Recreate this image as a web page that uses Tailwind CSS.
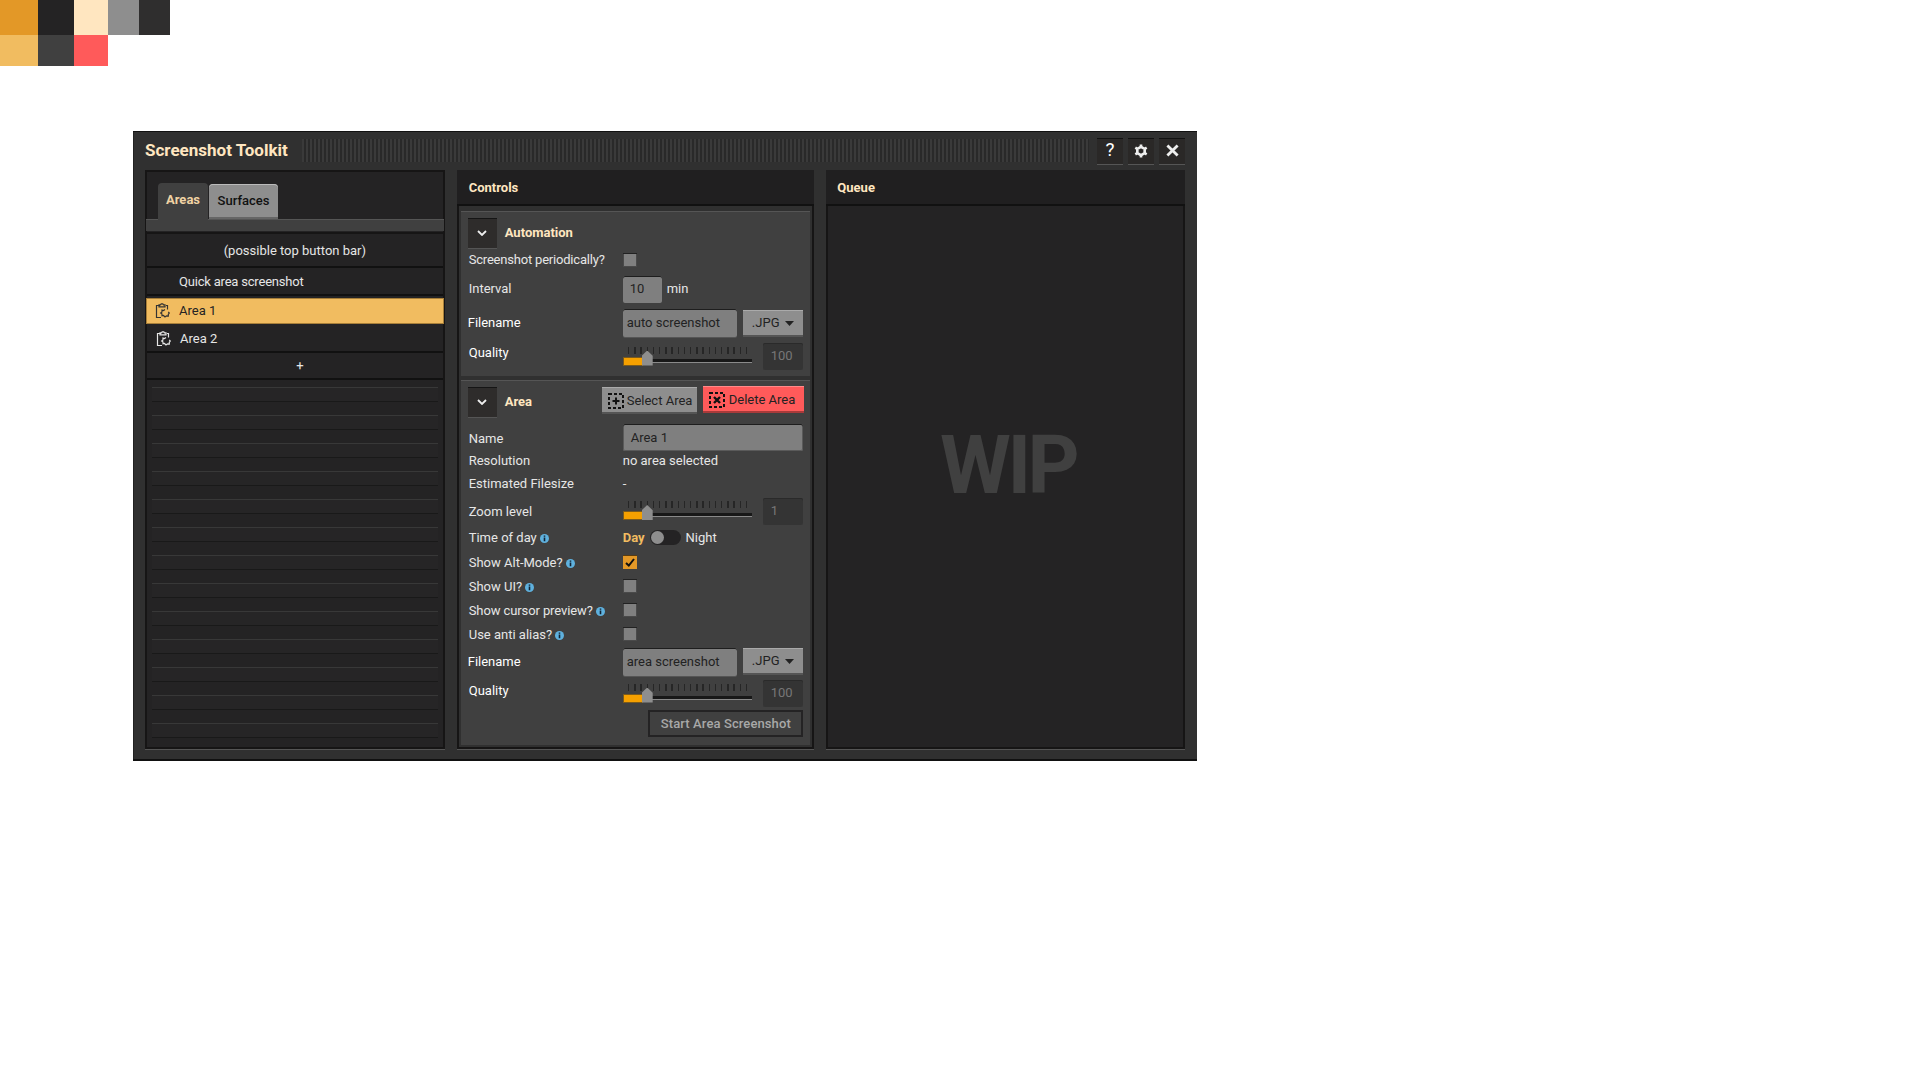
<!DOCTYPE html>
<html lang="en">
<head>
    <meta charset="UTF-8">
    <title>Screenshot Toolkit</title>
    <script src="https://cdn.jsdelivr.net/npm/@tailwindcss/browser@4"></script>
</head>
<body class="bg-white min-h-screen font-['Roboto',sans-serif] text-[13px] text-[#e6e6e6]">
    <!-- palette -->
    <div class="flex h-[35px]">
        <div class="w-[38px] bg-[#e39827]"></div>
        <div class="w-[36px] bg-[#242324]"></div>
        <div class="w-[34px] bg-[#ffe6c0]"></div>
        <div class="w-[31px] bg-[#8e8e8e]"></div>
        <div class="w-[31px] bg-[#2f2e2e]"></div>
    </div>
    <div class="flex h-[31px]">
        <div class="w-[38px] bg-[#f1bc60]"></div>
        <div class="w-[36px] bg-[#404040]"></div>
        <div class="w-[34px] bg-[#ff5a5a]"></div>
    </div>

    <!-- window -->
    <div class="ml-[133px] mt-[65px] w-[1064px] h-[630px] bg-[#303030] px-[12px] flex flex-col shadow-[inset_0_1px_0_#111,inset_0_-2px_0_#111,inset_1px_0_0_#222]">
        <div class="h-[39px] flex items-center shrink-0">
            <div class="w-[157px] font-bold text-[17px] text-[#ffe6c0]">Screenshot Toolkit</div>
            <div class="w-[788px] h-[23px] bg-[repeating-linear-gradient(90deg,#3a3a3a_0,#3a3a3a_2px,#292929_2px,#292929_4px)]"></div>
            <div class="ml-[8px] flex gap-[5px]">
                <div class="w-[26px] h-[26px] bg-[#2a2827] flex items-center justify-center text-white text-[19px] shadow-[inset_0_1px_0_#111,0_1px_0_#555]">?</div>
                <div class="w-[26px] h-[26px] bg-[#2a2827] flex items-center justify-center shadow-[inset_0_1px_0_#111,0_1px_0_#555]">
                    <svg width="14" height="14" viewBox="0 0 16 16"><path fill="none" stroke="#eee" stroke-width="3" d="M8 3.2 12.2 5.6V10.4L8 12.8 3.8 10.4V5.6Z"/><path stroke="#eee" stroke-width="3" d="M8 0.5V3M8 13V15.5M1.5 4.2 3.7 5.5M12.3 10.5 14.5 11.8M14.5 4.2 12.3 5.5M3.7 10.5 1.5 11.8"/></svg>
                </div>
                <div class="w-[26px] h-[26px] bg-[#2a2827] flex items-center justify-center shadow-[inset_0_1px_0_#111,0_1px_0_#555]">
                    <svg width="13" height="13" viewBox="0 0 14 14"><path stroke="#eee" stroke-width="3" d="M1.5 1.5 12.5 12.5M12.5 1.5 1.5 12.5"/></svg>
                </div>
            </div>
        </div>

        <div class="flex gap-[12px] h-[579px]">
            <!-- left panel -->
            <div class="w-[300px] bg-[#242324] flex flex-col shadow-[inset_0_0_0_2px_#161515,0_1px_0_#555]">
                <div class="h-[49px] flex items-end pl-[13px] shrink-0">
                    <div class="w-[50px] h-[39px] -mb-[3px] bg-[#404040] rounded-t-[4px] flex items-center justify-center pb-[5px] font-bold text-[#f0d3a4] z-10">Areas</div>
                    <div class="w-[69px] h-[35px] ml-[1px] bg-[#8e8e8e] rounded-t-[4px] flex items-center justify-center pb-[2px] text-[#111] font-medium shadow-[inset_0_1px_0_#bbb,inset_0_-2px_0_#666]">Surfaces</div>
                </div>
                <div class="h-[12px] mx-[1px] bg-[#404040] shadow-[inset_0_1px_0_#555] shrink-0"></div>
                <div class="h-[36px] mt-[1px] mx-[2px] pt-[4px] flex items-center justify-center border-b-2 border-[#111] shadow-[inset_0_2px_0_#161515] shrink-0">(possible top button bar)</div>
                <div class="h-[28px] mx-[2px] pl-[32px] pt-[2px] flex items-center border-b-2 border-[#111] tracking-[-0.2px]">Quick area screenshot</div>
                <div class="h-[26px] mx-[1px] mt-[2px] pl-[8px] flex items-center gap-[9px] bg-[#f1bc60] text-[#242324] shadow-[inset_0_0_0_1px_#a87f39]">
                    <svg width="16" height="16" viewBox="0 0 16 16" fill="none" stroke="#333" stroke-width="1.2"><path d="M6 2.5H2.5V14.5H7M12 2.5H13.5V6.5M5 3.8V1.8H6.5L7.2 0.8H8.8L9.5 1.8H11V3.8ZM11 6.5 9.5 7.5 8 7V9L6.7 10 8 11V12.8L9.5 12.5 11 14 12.5 12.8 14.3 13V11.3L15.3 10 14.3 8.8"/></svg>
                    <span>Area 1</span>
                </div>
                <div class="h-[27px] mx-[2px] mt-[2px] pl-[8px] flex items-center gap-[9px] border-b-2 border-[#111]">
                    <svg width="16" height="16" viewBox="0 0 16 16" fill="none" stroke="#e6e6e6" stroke-width="1.2"><path d="M6 2.5H2.5V14.5H7M12 2.5H13.5V6.5M5 3.8V1.8H6.5L7.2 0.8H8.8L9.5 1.8H11V3.8ZM11 6.5 9.5 7.5 8 7V9L6.7 10 8 11V12.8L9.5 12.5 11 14 12.5 12.8 14.3 13V11.3L15.3 10 14.3 8.8"/></svg>
                    <span>Area 2</span>
                </div>
                <div class="h-[27px] mx-[2px] flex items-center justify-center pl-[10px] border-b-2 border-[#111]">+</div>
                <div class="mt-[7px] mx-[7px] flex flex-col gap-[13px]">
                    <div class="h-[15px] bg-[#262526] shadow-[inset_0_1px_0_#383838,inset_0_-1px_0_#191919]"></div>
                    <div class="h-[15px] bg-[#262526] shadow-[inset_0_1px_0_#383838,inset_0_-1px_0_#191919]"></div>
                    <div class="h-[15px] bg-[#262526] shadow-[inset_0_1px_0_#383838,inset_0_-1px_0_#191919]"></div>
                    <div class="h-[15px] bg-[#262526] shadow-[inset_0_1px_0_#383838,inset_0_-1px_0_#191919]"></div>
                    <div class="h-[15px] bg-[#262526] shadow-[inset_0_1px_0_#383838,inset_0_-1px_0_#191919]"></div>
                    <div class="h-[15px] bg-[#262526] shadow-[inset_0_1px_0_#383838,inset_0_-1px_0_#191919]"></div>
                    <div class="h-[15px] bg-[#262526] shadow-[inset_0_1px_0_#383838,inset_0_-1px_0_#191919]"></div>
                    <div class="h-[15px] bg-[#262526] shadow-[inset_0_1px_0_#383838,inset_0_-1px_0_#191919]"></div>
                    <div class="h-[15px] bg-[#262526] shadow-[inset_0_1px_0_#383838,inset_0_-1px_0_#191919]"></div>
                    <div class="h-[15px] bg-[#262526] shadow-[inset_0_1px_0_#383838,inset_0_-1px_0_#191919]"></div>
                    <div class="h-[15px] bg-[#262526] shadow-[inset_0_1px_0_#383838,inset_0_-1px_0_#191919]"></div>
                    <div class="h-[15px] bg-[#262526] shadow-[inset_0_1px_0_#383838,inset_0_-1px_0_#191919]"></div>
                    <div class="h-[15px] bg-[#262526] shadow-[inset_0_1px_0_#383838,inset_0_-1px_0_#191919]"></div>
                </div>
            </div>

            <!-- controls panel -->
            <div class="w-[358px] bg-[#242324] flex flex-col shadow-[inset_0_0_0_2px_#161515,0_1px_0_#555]">
                <div class="h-[36px] pl-[12px] pt-[2px] flex items-center font-bold text-[#ffe6c0] border-b-2 border-[#111] bg-[#201f20] shrink-0">Controls</div>
                <div class="bg-[#303030] flex-1 mx-[2px] mb-[2px] px-[2px] pt-[5px] pb-[2px] flex flex-col gap-[4px]">
                    <!-- automation -->
                    <div class="h-[165px] bg-[#404040] shadow-[inset_0_1px_0_#555] pl-[7px] pr-[6px] pt-[7px] shrink-0">
                        <div class="h-[30px] flex items-center gap-[8px]">
                            <div class="w-[29px] h-[30px] bg-[#2e2c2b] flex items-center justify-center shadow-[inset_0_1px_0_#151515,0_1px_0_#555]">
                                <svg width="10" height="6" viewBox="0 0 10 6" fill="none" stroke="#eee" stroke-width="1.8"><path d="M1 1 5 5 9 1"/></svg>
                            </div>
                            <span class="font-bold text-[#ffe6c0]">Automation</span>
                        </div>
                        <div class="h-[24px] flex items-center">
                            <span class="w-[155px] pl-[1px] tracking-[-0.2px]">Screenshot periodically?</span>
                            <div class="w-[14px] h-[14px] bg-[#808080] shadow-[inset_0_1px_0_#222,inset_0_0_0_1px_#4a4a4a]"></div>
                        </div>
                        <div class="h-[34px] flex items-center">
                            <span class="w-[155px] pl-[1px]">Interval</span>
                            <div class="w-[39px] h-[27px] pl-[7px] flex items-center bg-[#7f7f7f] text-[#222] rounded-[2px] shadow-[inset_0_1px_0_#1e1e1e]">10</div>
                            <span class="ml-[5px]">min</span>
                        </div>
                        <div class="h-[34px] flex items-center">
                            <span class="w-[155px] text-white">Filename</span>
                            <div class="w-[114px] h-[28px] pl-[4px] flex items-center bg-[#7f7f7f] text-[#222] rounded-[2px] shadow-[inset_0_1px_0_#1e1e1e,0_1px_0_#555]">auto screenshot</div>
                            <div class="ml-[6px] w-[60px] h-[27px] flex items-center justify-center gap-[5px] bg-[#8e8e8e] text-[#222] shadow-[inset_0_1px_0_#aaa,inset_0_-2px_0_#555]">.JPG<svg width="9" height="5" viewBox="0 0 9 5"><path fill="#222" d="M0 0H9L4.5 5Z"/></svg></div>
                        </div>
                        <div class="h-[32px] flex items-center">
                            <span class="w-[155px] pl-[1px] -mt-[6px] text-white">Quality</span>
                            <div class="relative w-[129px] h-[27px]">
                                <div class="absolute left-[5px] top-[4px] w-[119px] h-[7px] bg-[repeating-linear-gradient(90deg,#262626_0,#262626_1.5px,transparent_1.5px,transparent_6.2px)]"></div>
                                <div class="absolute left-0 right-0 top-[16px] h-[4px] bg-[#181818] shadow-[inset_0_-1px_0_#8a8a8a]"></div>
                                <div class="absolute left-0 top-[14px] w-[20px] h-[9px] bg-[#f5a000] shadow-[inset_0_0_0_1px_#7a5a1d]"></div>
                                <div class="absolute left-[19px] top-[8px] w-[11px] h-[15px] bg-[#8e8e8e] [clip-path:polygon(50%_0,100%_35%,100%_100%,0_100%,0_35%)]"></div>
                            </div>
                            <div class="ml-[11px] w-[40px] h-[27px] pl-[8px] flex items-center bg-[#343434] text-[#777] rounded-[2px] shadow-[inset_0_1px_0_#2a2a2a]">100</div>
                        </div>
                    </div>

                    <!-- area -->
                    <div class="flex-1 bg-[#404040] shadow-[inset_0_1px_0_#555] pl-[7px] pr-[6px] pt-[6px]">
                        <div class="h-[31px] flex items-center">
                            <div class="w-[29px] h-[30px] bg-[#2e2c2b] flex items-center justify-center shadow-[inset_0_1px_0_#151515,0_1px_0_#555]">
                                <svg width="10" height="6" viewBox="0 0 10 6" fill="none" stroke="#eee" stroke-width="1.8"><path d="M1 1 5 5 9 1"/></svg>
                            </div>
                            <span class="ml-[8px] w-[97px] font-bold text-[#ffe6c0]">Area</span>
                            <div class="w-[95px] h-[27px] flex items-center pl-[6px] gap-[3px] bg-[#8e8e8e] text-[#222] -mt-[2px] shadow-[inset_0_1px_0_#aaa,inset_0_-2px_0_#555]">
                                <svg width="16" height="16" viewBox="0 0 16 16" fill="none" stroke="#111"><path stroke-width="2" stroke-dasharray="3 2" d="M1 1H15V15H1Z"/><path stroke-width="2" d="M8 4.5V11.5M4.5 8H11.5"/></svg>
                                <span>Select Area</span>
                            </div>
                            <div class="ml-[6px] w-[101px] h-[27px] flex items-center pl-[6px] gap-[4px] bg-[#ff5a5a] text-[#222] -mt-[4px] shadow-[inset_0_1px_0_#ff8a8a,inset_0_-2px_0_#a83a3a]">
                                <svg width="16" height="16" viewBox="0 0 16 16" fill="none" stroke="#111"><path stroke-width="2" stroke-dasharray="3 2" d="M1 1H15V15H1Z"/><path stroke-width="2.4" d="M5 5 11 11M11 5 5 11"/></svg>
                                <span>Delete Area</span>
                            </div>
                        </div>
                        <div class="h-[31px] mt-[5px] flex items-center">
                            <span class="w-[155px] pl-[1px] pt-[2px]">Name</span>
                            <div class="w-[180px] h-[27px] pl-[8px] flex items-center bg-[#7f7f7f] text-[#222] rounded-[2px] shadow-[inset_0_1px_0_#1e1e1e,inset_0_0_0_1px_#5a5a5a]">Area 1</div>
                        </div>
                        <div class="h-[14px] flex items-center">
                            <span class="w-[155px] pl-[1px] pt-[2px]">Resolution</span><span class="pt-[2px]">no area selected</span>
                        </div>
                        <div class="h-[33px] flex items-center">
                            <span class="w-[155px] pl-[1px] pt-[1px]">Estimated Filesize</span><span class="pt-[1px]">-</span>
                        </div>
                        <div class="h-[24px] flex items-center">
                            <span class="w-[155px] pl-[1px]">Zoom level</span>
                            <div class="relative w-[129px] h-[27px] shrink-0 -mt-[3px]">
                                <div class="absolute left-[5px] top-[4px] w-[119px] h-[7px] bg-[repeating-linear-gradient(90deg,#262626_0,#262626_1.5px,transparent_1.5px,transparent_6.2px)]"></div>
                                <div class="absolute left-0 right-0 top-[16px] h-[4px] bg-[#181818] shadow-[inset_0_-1px_0_#8a8a8a]"></div>
                                <div class="absolute left-0 top-[14px] w-[20px] h-[9px] bg-[#f5a000] shadow-[inset_0_0_0_1px_#7a5a1d]"></div>
                                <div class="absolute left-[19px] top-[8px] w-[11px] h-[15px] bg-[#8e8e8e] [clip-path:polygon(50%_0,100%_35%,100%_100%,0_100%,0_35%)]"></div>
                            </div>
                            <div class="ml-[11px] w-[40px] h-[27px] pl-[8px] flex items-center bg-[#343434] text-[#777] rounded-[2px] shrink-0 -mt-[2px] shadow-[inset_0_1px_0_#2a2a2a]">1</div>
                        </div>
                        <div class="h-[26px] flex items-center">
                            <span class="w-[155px] pl-[1px] pt-[2px] flex items-center gap-[3px]">Time of day
                                <svg width="9" height="9" viewBox="0 0 8 8"><circle cx="4" cy="4" r="4" fill="#5fb1de"/><path stroke="#123" stroke-width="1.4" d="M4 3.2V6.5M4 1.4V2.5"/></svg>
                            </span>
                            <span class="pt-[2px] font-bold text-[#f1bc60]">Day</span>
                            <div class="ml-[5px] w-[31px] h-[15px] rounded-full bg-[#242324] flex items-center"><div class="ml-[1px] w-[13px] h-[13px] rounded-full bg-[#8e8e8e]"></div></div>
                            <span class="ml-[5px] pt-[2px]">Night</span>
                        </div>
                        <div class="h-[24px] flex items-center">
                            <span class="w-[155px] pl-[1px] pt-[2px] flex items-center gap-[3px]">Show Alt-Mode?
                                <svg width="9" height="9" viewBox="0 0 8 8"><circle cx="4" cy="4" r="4" fill="#5fb1de"/><path stroke="#123" stroke-width="1.4" d="M4 3.2V6.5M4 1.4V2.5"/></svg>
                            </span>
                            <div class="w-[14px] h-[14px] bg-[#e39827] flex items-center justify-center shadow-[inset_0_1px_0_#5a3c10]">
                                <svg width="10" height="9" viewBox="0 0 10 9" fill="none" stroke="#111" stroke-width="2"><path d="M1 5 3.8 7.5 9 1"/></svg>
                            </div>
                        </div>
                        <div class="h-[24px] flex items-center">
                            <span class="w-[155px] pl-[1px] pt-[2px] flex items-center gap-[3px]">Show UI?
                                <svg width="9" height="9" viewBox="0 0 8 8"><circle cx="4" cy="4" r="4" fill="#5fb1de"/><path stroke="#123" stroke-width="1.4" d="M4 3.2V6.5M4 1.4V2.5"/></svg>
                            </span>
                            <div class="w-[14px] h-[14px] bg-[#808080] shadow-[inset_0_1px_0_#222,inset_0_0_0_1px_#4a4a4a]"></div>
                        </div>
                        <div class="h-[24px] flex items-center">
                            <span class="w-[155px] pl-[1px] pt-[2px] flex items-center gap-[3px] tracking-[-0.1px]">Show cursor preview?
                                <svg width="9" height="9" viewBox="0 0 8 8"><circle cx="4" cy="4" r="4" fill="#5fb1de"/><path stroke="#123" stroke-width="1.4" d="M4 3.2V6.5M4 1.4V2.5"/></svg>
                            </span>
                            <div class="w-[14px] h-[14px] bg-[#808080] shadow-[inset_0_1px_0_#222,inset_0_0_0_1px_#4a4a4a]"></div>
                        </div>
                        <div class="h-[24px] flex items-center">
                            <span class="w-[155px] pl-[1px] pt-[2px] flex items-center gap-[3px]">Use anti alias?
                                <svg width="9" height="9" viewBox="0 0 8 8"><circle cx="4" cy="4" r="4" fill="#5fb1de"/><path stroke="#123" stroke-width="1.4" d="M4 3.2V6.5M4 1.4V2.5"/></svg>
                            </span>
                            <div class="w-[14px] h-[14px] bg-[#808080] shadow-[inset_0_1px_0_#222,inset_0_0_0_1px_#4a4a4a]"></div>
                        </div>
                        <div class="h-[32px] flex items-center">
                            <span class="w-[155px] text-white">Filename</span>
                            <div class="w-[114px] h-[28px] pl-[4px] flex items-center bg-[#7f7f7f] text-[#222] rounded-[2px] shadow-[inset_0_1px_0_#1e1e1e,0_1px_0_#555]">area screenshot</div>
                            <div class="ml-[6px] w-[60px] h-[27px] -mt-[2px] flex items-center justify-center gap-[5px] bg-[#8e8e8e] text-[#222] shadow-[inset_0_1px_0_#aaa,inset_0_-2px_0_#555]">.JPG<svg width="9" height="5" viewBox="0 0 9 5"><path fill="#222" d="M0 0H9L4.5 5Z"/></svg></div>
                        </div>
                        <div class="h-[30px] flex items-center">
                            <span class="w-[155px] pl-[1px] -mt-[4px] text-white">Quality</span>
                            <div class="relative w-[129px] h-[27px]">
                                <div class="absolute left-[5px] top-[4px] w-[119px] h-[7px] bg-[repeating-linear-gradient(90deg,#262626_0,#262626_1.5px,transparent_1.5px,transparent_6.2px)]"></div>
                                <div class="absolute left-0 right-0 top-[16px] h-[4px] bg-[#181818] shadow-[inset_0_-1px_0_#8a8a8a]"></div>
                                <div class="absolute left-0 top-[14px] w-[20px] h-[9px] bg-[#f5a000] shadow-[inset_0_0_0_1px_#7a5a1d]"></div>
                                <div class="absolute left-[19px] top-[8px] w-[11px] h-[15px] bg-[#8e8e8e] [clip-path:polygon(50%_0,100%_35%,100%_100%,0_100%,0_35%)]"></div>
                            </div>
                            <div class="ml-[11px] w-[40px] h-[27px] pl-[8px] flex items-center bg-[#343434] text-[#777] rounded-[2px] shadow-[inset_0_1px_0_#2a2a2a]">100</div>
                        </div>
                        <div class="mt-[2px] flex justify-end pr-[1px]">
                            <div class="w-[155px] h-[27px] flex items-center justify-center bg-[#404040] font-medium text-[#a8a8a8] tracking-[0.1px] shadow-[inset_0_0_0_2px_#242324]">Start Area Screenshot</div>
                        </div>
                    </div>
                </div>
            </div>

            <!-- queue panel -->
            <div class="w-[359px] bg-[#242324] flex flex-col shadow-[inset_0_0_0_2px_#161515,0_1px_0_#555]">
                <div class="h-[36px] pl-[11px] pt-[2px] flex items-center font-bold text-[#ffe6c0] border-b-2 border-[#111] bg-[#201f20] shrink-0">Queue</div>
                <div class="flex-1 flex justify-center pt-[220px] pl-[5px]">
                    <span class="font-bold text-[81px] leading-[80px] text-[#404040] tracking-[-3.5px]">WIP</span>
                </div>
            </div>
        </div>
    </div>
</body>
</html>
